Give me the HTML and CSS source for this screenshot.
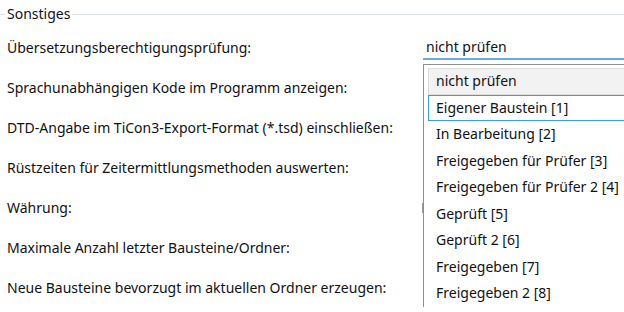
FILE: index.html
```html
<!DOCTYPE html>
<html lang="de">
  <head>
    <meta charset="UTF-8" />
    <title>Einstellungen</title>
    <link rel="stylesheet" href="styles.css">
  </head>
  <body>
    <fieldset class="group">
      <legend>Sonstiges</legend>

      <div class="rows">
        <div class="row">
          <label>Übersetzungsberechtigungsprüfung:</label>
          <div class="combo">nicht prüfen</div>
        </div>
        <div class="row">
          <label>Sprachunabhängigen Kode im Programm anzeigen:</label>
        </div>
        <div class="row">
          <label>DTD-Angabe im TiCon3-Export-Format (*.tsd) einschließen:</label>
        </div>
        <div class="row">
          <label>Rüstzeiten für Zeitermittlungsmethoden auswerten:</label>
        </div>
        <div class="row">
          <label>Währung:</label>
          <div class="peek"></div>
        </div>
        <div class="row">
          <label>Maximale Anzahl letzter Bausteine/Ordner:</label>
        </div>
        <div class="row">
          <label>Neue Bausteine bevorzugt im aktuellen Ordner erzeugen:</label>
        </div>
      </div>

      <!-- open dropdown of the first combo -->
      <ul class="dropdown">
        <li class="selected">nicht prüfen</li>
        <li class="focused">Eigener Baustein [1]</li>
        <li>In Bearbeitung [2]</li>
        <li>Freigegeben für Prüfer [3]</li>
        <li>Freigegeben für Prüfer 2 [4]</li>
        <li>Geprüft [5]</li>
        <li>Geprüft 2 [6]</li>
        <li>Freigegeben [7]</li>
        <li>Freigegeben 2 [8]</li>
      </ul>
    </fieldset>
  </body>
</html>
```

FILE: styles.css
```css
body {
  margin: 0;
  background: #fff;
  font-family: "Noto Sans", "Open Sans", sans-serif;
  font-size: 14px;
  color: #111;
  overflow: hidden;
}
.group {
  position: relative;
  margin: 6px 0 0 0;
  padding: 0;
  border: none;
  border-top: 1px solid #dde3ea;
  min-width: 0;
}
.group legend {
  margin-left: 5px;
  padding: 0 2px;
  line-height: 16px;
}
.rows {
  display: flex;
  flex-direction: column;
  padding-top: 5px;
}
.row {
  display: flex;
  align-items: center;
  height: 40px;
  position: relative;
}
.row label {
  width: 416px;
  padding-left: 7px;
}
.combo {
  flex: 1;
  align-self: flex-start;
  margin-top: 8px;
  height: 23px;
  line-height: 24px;
  padding-left: 3px;
  border-bottom: 2px solid #66acdf;
}
.peek {
  position: absolute;
  left: 422px;
  top: 16px;
  width: 2px;
  height: 10px;
  background: #9a9a9a;
}
.dropdown {
  position: absolute;
  left: 423px;
  top: 42px;
  width: 220px;
  height: 238px;
  margin: 0;
  padding: 3px 0 4px 4px;
  list-style: none;
  background: #fff;
  border: 1px solid #8e8f8f;
}
.dropdown li {
  box-sizing: border-box;
  height: 26.5px;
  line-height: 24.5px;
  padding-left: 7px;
  border: 1px solid transparent;
  white-space: nowrap;
}
.dropdown li.selected {
  background: #f2f2f2;
  border-color: #dcdcdc;
}
.dropdown li.focused {
  border-color: #3d9be2;
}
```
